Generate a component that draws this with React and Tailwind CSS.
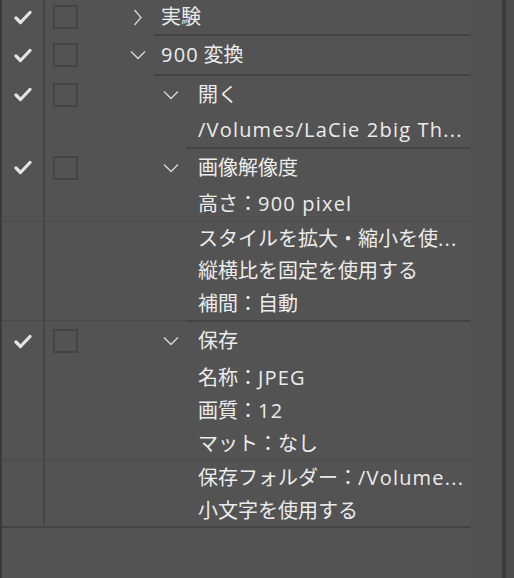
import React from "react";

const FONT = { fontFamily: '"Open Sans", "Noto Sans CJK JP", sans-serif' };

function Txt({ children }) {
  const parts = String(children).split(/([\x20-\x7e\u2009]+)/).filter((p) => p.length);
  return (
    <span>
      {parts.map((p, i) =>
        /^[\x20-\x7e\u2009]+$/.test(p) ? (
          <span key={i} className="tracking-[0.06em]">{p}</span>
        ) : (
          <span key={i}>{p}</span>
        )
      )}
    </span>
  );
}

function Check() {
  return (
    <svg width="18" height="15" viewBox="0 0 18 15" fill="none">
      <path d="M2 8 L6.5 12.5 L16 2.5" stroke="#e4e4e4" strokeWidth="3.2" strokeLinecap="round" strokeLinejoin="round" />
    </svg>
  );
}

function ChevDown() {
  return (
    <svg width="16" height="10" viewBox="0 0 16 10" fill="none">
      <path d="M1 1.5 L8 8.5 L15 1.5" stroke="#d6d6d6" strokeWidth="1.4" />
    </svg>
  );
}

function ChevRight() {
  return (
    <svg width="16" height="17" viewBox="0 0 16 17" fill="none">
      <path d="M4.5 1 L11 8.5 L4.5 16" stroke="#d6d6d6" strokeWidth="1.3" />
    </svg>
  );
}

function Line({ h, level, chev, check, text, border }) {
  const mid = level === 1 ? "w-[109px]" : "w-[141px]";
  const textPad = level === 1 ? "pl-[7px]" : "pl-[12px]";
  const chevMargin = level === 1 ? "ml-[52px]" : "ml-[85px]";
  return (
    <div className="flex flex-col">
      <div className="flex" style={{ height: h }}>
        <div className="w-[41px] flex items-center justify-center">{check ? <Check /> : null}</div>
        <div className="w-[2px] bg-[#464646]" />
        <div className={`${mid} flex items-center`}>
          {check ? (
            <div className="ml-[8px] w-[25px] h-[24px] border-2 border-[#444444]" />
          ) : (
            <div className="ml-[8px] w-[25px]" />
          )}
          {chev ? (
            <div className={`${chevMargin} w-[16px] flex items-center justify-center`}>
              {chev === "down" ? <ChevDown /> : <ChevRight />}
            </div>
          ) : null}
        </div>
        <div className={`flex-1 flex items-center ${textPad} text-[20px] text-[#ececec] whitespace-pre overflow-hidden`}>
          <Txt>{text}</Txt>
        </div>
      </div>
      {border === "right" && (
        <div className="flex h-[2px]">
          <div className="w-[41px]" />
          <div className="w-[2px] bg-[#464646]" />
          <div className={mid} />
          <div className="flex-1 bg-[#444444]" />
        </div>
      )}
      {border === "faint" && <div className="flex h-px bg-[#4a4a4a]" />}
      {border === "mixed" && (
        <div className="flex h-[2px]">
          <div className="w-[41px] h-px bg-[#4a4a4a]" />
          <div className="w-[2px] bg-[#464646]" />
          <div className="w-[141px] h-px bg-[#4a4a4a]" />
          <div className="flex-1 bg-[#444444]" />
        </div>
      )}
      {border === "full" && <div className="h-[2px] bg-[#444444]" />}
    </div>
  );
}

export default function App() {
  return (
    <div className="flex h-[578px] w-[514px] bg-[#535353] overflow-hidden" style={FONT}>
      <div className="w-[2px] bg-[#3a3a3a]" />
      <div className="w-[468px] flex flex-col">
        <Line h={34} level={1} chev="right" check text="実験" border="right" />
        <Line h={38} level={1} chev="down" check text={"900\u2009変換"} border="right" />
        <Line h={37} level={2} chev="down" check text="開く" />
        <Line h={34} level={2} text="/Volumes/LaCie 2big Th..." border="right" />
        <Line h={37} level={2} chev="down" check text="画像解像度" />
        <Line h={35} level={2} text="高さ：900 pixel" border="faint" />
        <Line h={33} level={2} text="スタイルを拡大・縮小を使..." />
        <Line h={32} level={2} text="縦横比を固定を使用する" />
        <Line h={33} level={2} text="補間：自動" border="mixed" />
        <Line h={38} level={2} chev="down" check text="保存" />
        <Line h={35} level={2} text="名称：JPEG" />
        <Line h={32} level={2} text="画質：12" />
        <Line h={33} level={2} text="マット：なし" border="faint" />
        <Line h={34} level={2} text="保存フォルダー：/Volume..." />
        <Line h={31} level={2} text="小文字を使用する" border="full" />
      </div>
      <div className="w-[32px] bg-[#515151]" />
      <div className="w-[4px] bg-[#3c3c3c]" />
      <div className="w-[8px] bg-[#4d4d4d]" />
    </div>
  );
}
